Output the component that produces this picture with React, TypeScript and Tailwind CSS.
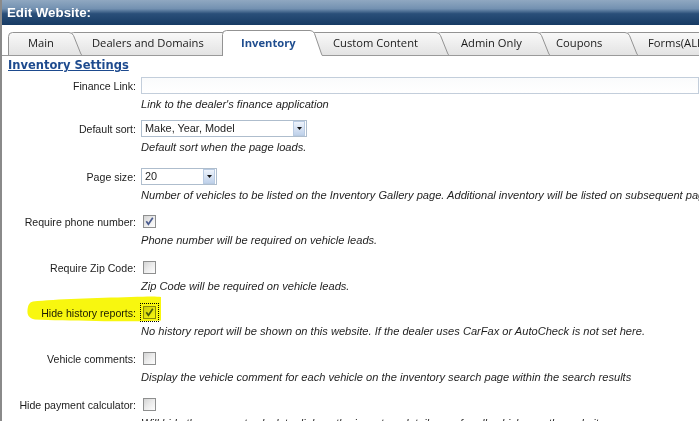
import React from 'react';

type TabDef = { label: string; w: number; cls: string; pad: string; active?: boolean };

const tabs: TabDef[] = [
  { label: 'Main', w: 74, cls: 'w-[74px] ml-[6px] z-[9]', pad: 'pl-[20px]' },
  { label: 'Dealers and Domains', w: 169, cls: 'w-[169px] -ml-[13px] z-[8]', pad: 'pl-[23px]' },
  { label: 'Inventory', w: 101, cls: 'w-[101px] -ml-[16px] z-20', pad: 'pl-[19px]', active: true },
  { label: 'Custom Content', w: 139, cls: 'w-[139px] -ml-[13px] z-[6]', pad: 'pl-[23px]' },
  { label: 'Admin Only', w: 114, cls: 'w-[114px] -ml-[13px] z-[5]', pad: 'pl-[25px]' },
  { label: 'Coupons', w: 101, cls: 'w-[101px] -ml-[13px] z-[4]', pad: 'pl-[19px]' },
  { label: 'Forms(ALL)', w: 130, cls: 'w-[130px] -ml-[13px] z-[3]', pad: 'pl-[23px]' },
];

function TabShape({ w, h, active }: { w: number; h: number; active?: boolean }) {
  const s = 10;
  const edge = `M0.5,${h} L0.5,4.5 Q0.5,0.5 4.5,0.5 L${w - s - 3},0.5 Q${w - s},0.5 ${w - s + 1.5},3.5 L${w - 1.5},${h - 2} Q${w - 0.8},${h} ${w},${h}`;
  const id = active ? 'tabOn' : 'tabOff';
  return (
    <svg className="absolute inset-0" width={w} height={h}>
      <defs>
        <linearGradient id={id} x1="0" y1="0" x2="0" y2="1">
          <stop offset="0" stopColor={active ? '#ffffff' : '#f9f9f9'} />
          <stop offset="1" stopColor={active ? '#ffffff' : '#e3e3e3'} />
        </linearGradient>
      </defs>
      <path d={edge + ' Z'} fill={`url(#${id})`} />
      <path d={edge} fill="none" stroke="#939393" strokeWidth="1" />
    </svg>
  );
}

function Tab({ t }: { t: TabDef }) {
  const h = t.active ? 26 : 23;
  return (
    <div className={`relative shrink-0 ${t.cls} ${t.active ? 'h-[26px] -mb-px' : 'h-[23px]'}`}>
      <TabShape w={t.w} h={h} active={t.active} />
      <div
        className={`relative flex h-full items-center ${t.pad} whitespace-nowrap font-['Open_Sans',sans-serif] text-[11.2px] ${
          t.active ? 'font-bold text-[#1f4d8f]' : 'text-[#1a1a1a]'
        }`}
      >
        {t.label}
      </div>
    </div>
  );
}

function Label({ children }: { children: React.ReactNode }) {
  return <div className="w-[134px] shrink-0 pt-[2px] text-right whitespace-nowrap">{children}</div>;
}

function Desc({ children }: { children: React.ReactNode }) {
  return (
    <div className="mt-[3px] h-[14px] pl-[139px] text-[11.1px] leading-[14px] italic whitespace-nowrap text-[#1f1f1f]">
      {children}
    </div>
  );
}

function SelectBox({ value, w }: { value: string; w: string }) {
  return (
    <div className={`ml-[5px] flex h-[17px] ${w} items-center border border-[#aebdcd] bg-white pl-[3px]`}>
      <span className="flex-1 text-[10.9px] whitespace-nowrap">{value}</span>
      <span className="mr-px flex h-[15px] w-[12px] items-center justify-center border border-[#b9cbe2] bg-gradient-to-b from-[#eef3fb] to-[#bfd1ea]">
        <svg width="5" height="3" viewBox="0 0 5 3">
          <path d="M0 0 H5 L2.5 3 Z" fill="#111" />
        </svg>
      </span>
    </div>
  );
}

function Check({ checked, focus }: { checked?: boolean; focus?: boolean }) {
  return (
    <div
      className={`relative ml-[7px] h-[13px] w-[13px] border border-[#8e8f8f] bg-gradient-to-br from-[#d4d4d4] via-[#ececec] to-[#fdfdfd] ${
        focus ? 'outline-1 outline-dotted outline-black outline-offset-2' : ''
      }`}
    >
      {checked && (
        <svg className="absolute inset-0" width="11" height="11" viewBox="0 0 11 11">
          <path d="M2.3 5.2 L4.4 8.2 L8.8 1.8" fill="none" stroke="#4a5b8e" strokeWidth="1.7" />
        </svg>
      )}
    </div>
  );
}

export default function App() {
  return (
    <div className="h-[421px] w-[699px] overflow-hidden border-l-2 border-[#8a8a8a] bg-white font-['Liberation_Sans',Arial,sans-serif] text-[10.6px] text-[#1c1c1c]">
      {/* title bar */}
      <div className="flex h-[25px] items-center bg-[linear-gradient(to_bottom,#90a8c1_0%,#7391b1_35%,#2a4f79_55%,#173b64_100%)] pl-[5px]">
        <span className="text-[13.3px] font-bold text-white">Edit Website:</span>
      </div>

      {/* tabs */}
      <div className="flex h-[31px] items-end border-b border-[#9a9a9a]">
        {tabs.map((t) => (
          <Tab key={t.label} t={t} />
        ))}
      </div>

      {/* settings */}
      <div className="mt-px pl-[6px]">
        <a className="block h-[16px] font-['DejaVu_Sans',Verdana,sans-serif] text-[11.5px] leading-[16px] font-bold text-[#1d4a8e] underline">
          Inventory Settings
        </a>
      </div>

      <div className="mt-[4px] flex h-[17px] items-center">
        <Label>Finance Link:</Label>
        <div className="ml-[5px] h-[17px] flex-1 border border-[#c3cedb] bg-gradient-to-b from-[#fafbfc] to-white" />
      </div>
      <Desc>Link to the dealer's finance application</Desc>

      <div className="mt-[9px] flex h-[17px] items-center">
        <Label>Default sort:</Label>
        <SelectBox value="Make, Year, Model" w="w-[166px]" />
      </div>
      <Desc>Default sort when the page loads.</Desc>

      <div className="mt-[14px] flex h-[17px] items-center">
        <Label>Page size:</Label>
        <SelectBox value="20" w="w-[76px]" />
      </div>
      <Desc>
        Number of vehicles to be listed on the Inventory Gallery page. Additional inventory will be listed on subsequent pages.
      </Desc>

      <div className="mt-[11px] flex h-[17px] items-center">
        <Label>Require phone number:</Label>
        <Check checked />
      </div>
      <Desc>Phone number will be required on vehicle leads.</Desc>

      <div className="mt-[12px] flex h-[17px] items-center">
        <Label>Require Zip Code:</Label>
        <Check />
      </div>
      <Desc>Zip Code will be required on vehicle leads.</Desc>

      <div className="relative mt-[11px] flex h-[17px] items-center">
        <Label>Hide history reports:</Label>
        <Check checked focus />
        {/* marker highlight */}
        <svg
          className="pointer-events-none absolute top-[-8px] left-[24px] mix-blend-multiply"
          width="136"
          height="27"
          viewBox="0 0 136 27"
        >
          <path
            d="M7 5.5 C 30 3, 70 2, 105 1 C 120 0.5, 130 0, 135 1 L 135 24.5 C 120 25.5, 95 25.5, 70 25 C 45 24.5, 25 24.5, 9 23.5 C 3 22.5, 1 19, 1.5 14 C 2 9.5, 3 6.5, 7 5.5 Z"
            fill="#f8f70f"
          />
        </svg>
      </div>
      <Desc>No history report will be shown on this website. If the dealer uses CarFax or AutoCheck is not set here.</Desc>

      <div className="mt-[12px] flex h-[17px] items-center">
        <Label>Vehicle comments:</Label>
        <Check />
      </div>
      <Desc>Display the vehicle comment for each vehicle on the inventory search page within the search results</Desc>

      <div className="mt-[12px] flex h-[17px] items-center">
        <Label>Hide payment calculator:</Label>
        <Check />
      </div>
      <Desc>Will hide the payment calculator link on the inventory detail page for all vehicles on the website.</Desc>
    </div>
  );
}
